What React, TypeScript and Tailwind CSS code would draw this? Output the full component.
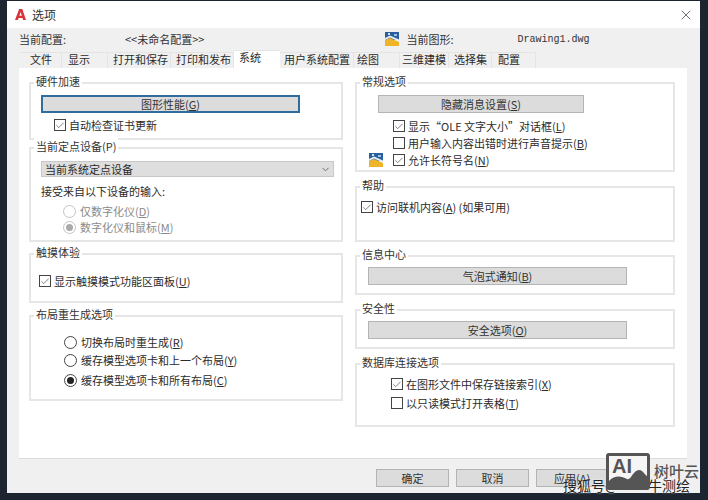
import type { ReactNode } from 'react';
import { X, ChevronDown, Check } from 'lucide-react';

const tabs = [
  { label: '文件', width: 'w-[42px] pl-[10px]' },
  { label: '显示', width: 'w-[46px] pl-[6px]' },
  { label: '打开和保存', width: 'w-[63px] pl-[5px]' },
  { label: '打印和发布', width: 'w-[63px] pl-[5px]' },
  { label: '系统', width: 'w-[46px] pl-[5px]', active: true },
  { label: '用户系统配置', width: 'w-[74px] pl-[4px]' },
  { label: '绘图', width: 'w-[46px] pl-[3px]' },
  { label: '三维建模', width: 'w-[49px] pl-[2px]' },
  { label: '选择集', width: 'w-[43px] pl-[5px]' },
  { label: '配置', width: 'w-[44px] pl-[6px]' },
];

const Key = ({ k }: { k: string }) => (
  <span>
    (<span className="underline">{k}</span>)
  </span>
);

const Group = ({ title, className, children }: { title: string; className: string; children?: ReactNode }) => (
  <div className={`relative border-2 border-[#e6e6e6] ${className}`}>
    <span className="absolute left-[3px] top-[-12px] bg-white px-[2px] leading-[18px] text-[#333]">{title}</span>
    {children}
  </div>
);

const Btn = ({ children, className, focused }: { children: ReactNode; className: string; focused?: boolean }) => (
  <div
    className={`flex items-center justify-center bg-[#dcdcdc] text-[#333] ${
      focused ? 'border-2 border-[#2f6d9e]' : 'border border-[#b4b4b4]'
    } ${className}`}
  >
    {children}
  </div>
);

const Checkbox = ({ label, checked, className = '' }: { label: ReactNode; checked?: boolean; className?: string }) => (
  <div className={`flex h-[16px] items-center gap-[3px] whitespace-nowrap ${className}`}>
    <span className="flex h-[12px] w-[12px] shrink-0 items-center justify-center border border-[#444] bg-white">
      {checked && <Check size={11} strokeWidth={1.5} className="text-[#333]" />}
    </span>
    {label}
  </div>
);

const Radio = ({ label, checked, disabled, className = '' }: { label: ReactNode; checked?: boolean; disabled?: boolean; className?: string }) => (
  <div className={`flex h-[16px] items-center gap-[4px] whitespace-nowrap ${disabled ? 'text-[#8a8a8a]' : ''} ${className}`}>
    <span className={`flex h-[13px] w-[13px] shrink-0 items-center justify-center rounded-full border bg-white ${disabled ? 'border-[#c4c4c4]' : 'border-[#444]'}`}>
      {checked && <span className={`h-[7px] w-[7px] rounded-full ${disabled ? 'bg-[#aaa]' : 'bg-[#222]'}`} />}
    </span>
    {label}
  </div>
);

const DrawingIcon = ({ className }: { className: string }) => (
  <svg viewBox="0 0 14 14" className={className}>
    <rect x="0" y="0" width="14" height="8" fill="#2a5f9e" />
    <path d="M0 8 L5 6 L14 10 V14 H0 Z" fill="#f0b429" />
    <path d="M0 8 L5 5.5 L14 9.5 V7.5 L5 3.5 L0 6 Z" fill="#e8eef5" />
    <rect x="3" y="1" width="2" height="2" fill="#cfe0f0" />
    <rect x="9" y="2" width="3" height="2" fill="#9cc3e6" />
  </svg>
);

export default function App() {
  return (
    <div className="h-[500px] w-[708px] overflow-hidden bg-[#1d2530] pl-[7px] pt-[1px] font-['Noto_Sans_CJK_SC',sans-serif] text-[11px] text-[#2b2b2b]">
      <div className="relative h-[492px] w-[693px] bg-[#f0f0f0]">
        {/* title bar */}
        <div className="flex h-[27px] items-center bg-white pl-[8px] pr-[6px]">
          <svg viewBox="0 0 12 12" className="h-[11px] w-[11px]">
            <path d="M0 12 L4.5 0 H8 L12 12 H8.8 L8.2 9.8 H3.9 L3.2 12 Z M4.8 7.4 H7.4 L6.2 3.4 Z" fill="#d8343a" fillRule="evenodd" />
          </svg>
          <span className="ml-[6px] text-[12px] text-[#333]">选项</span>
          <X size={16} strokeWidth={1} className="ml-auto text-[#222]" />
        </div>

        {/* current profile row */}
        <div className="flex h-[24px] items-center whitespace-nowrap pb-[2px] pl-[12px] text-[#333]">
          <span className="w-[106px]">当前配置:</span>
          <span>&lt;&lt;未命名配置&gt;&gt;</span>
          <DrawingIcon className="ml-[181px] h-[14px] w-[14px]" />
          <span className="ml-[7px] w-[111px]">当前图形:</span>
          <span className="font-['Liberation_Mono',monospace] text-[10px]">Drawing1.dwg</span>
        </div>

        {/* tabs */}
        <div className="flex h-[16px] items-end pl-[13px]">
          {tabs.map((tab) => (
            <div
              key={tab.label}
              className={`flex items-center whitespace-nowrap border-t border-[#e4e4e4] ${tab.width} ${
                tab.active ? 'relative z-10 h-[18px] bg-white pb-[4px]' : 'h-[16px] border-r bg-[#f0f0f0] pb-[2px]'
              }`}
            >
              {tab.label}
            </div>
          ))}
        </div>

        {/* panel */}
        <div className="ml-[12px] flex h-[390px] w-[668px] gap-[12px] bg-white pl-[10px] pt-[14px] shadow-[0_1px_0_#dcdcdc]">
          <div className="flex w-[314px] flex-col">
            <Group title="硬件加速" className="h-[58px] pl-[10px] pt-[11px]">
              <Btn focused className="h-[18px] w-[259px]">
                <span>图形性能<Key k="G" /></span>
              </Btn>
              <Checkbox checked className="ml-[13px] mt-[4px]" label="自动检查证书更新" />
            </Group>

            <Group title="当前定点设备(P)" className="mt-[7px] h-[95px] pl-[10px] pt-[12px]">
              <div className="flex h-[16px] w-[293px] items-center justify-between border border-[#c8c8c8] bg-[#dedede] pl-[3px] pr-[2px]">
                <span>当前系统定点设备</span>
                <ChevronDown size={11} className="text-[#666]" />
              </div>
              <div className="mt-[6px] h-[17px] leading-[17px]">接受来自以下设备的输入:</div>
              <Radio disabled className="ml-[22px] mt-[3px]" label={<span>仅数字化仪<Key k="D" /></span>} />
              <Radio disabled checked className="ml-[22px]" label={<span>数字化仪和鼠标<Key k="M" /></span>} />
            </Group>

            <Group title="触摸体验" className="mt-[11px] h-[50px] pl-[8px] pt-[18px]">
              <Checkbox checked label={<span>显示触摸模式功能区面板<Key k="U" /></span>} />
            </Group>

            <Group title="布局重生成选项" className="mt-[12px] h-[86px] pl-[33px] pt-[17px]">
              <Radio label={<span>切换布局时重生成<Key k="R" /></span>} />
              <Radio className="mt-[2px]" label={<span>缓存模型选项卡和上一个布局<Key k="Y" /></span>} />
              <Radio checked className="mt-[4px]" label={<span>缓存模型选项卡和所有布局<Key k="C" /></span>} />
            </Group>
          </div>

          <div className="flex w-[320px] flex-col">
            <Group title="常规选项" className="relative h-[90px] pl-[21px] pt-[11px]">
              <Btn className="h-[18px] w-[206px]">
                <span>隐藏消息设置<Key k="S" /></span>
              </Btn>
              <Checkbox checked className="ml-[15px] mt-[5px]" label={<span>显示“OLE 文字大小”对话框<Key k="L" /></span>} />
              <Checkbox className="ml-[15px] mt-[1px]" label={<span>用户输入内容出错时进行声音提示<Key k="B" /></span>} />
              <Checkbox checked className="ml-[15px] mt-[1px]" label={<span>允许长符号名<Key k="N" /></span>} />
              <DrawingIcon className="absolute left-[12px] top-[69px] h-[14px] w-[14px]" />
            </Group>

            <Group title="帮助" className="mt-[14px] h-[56px] pl-[4px] pt-[11px]">
              <Checkbox checked label={<span>访问联机内容<Key k="A" /> (如果可用)</span>} />
            </Group>

            <Group title="信息中心" className="mt-[13px] h-[40px] pl-[11px] pt-[10px]">
              <Btn className="h-[18px] w-[259px]">
                <span>气泡式通知<Key k="B" /></span>
              </Btn>
            </Group>

            <Group title="安全性" className="mt-[14px] h-[40px] pl-[11px] pt-[10px]">
              <Btn className="h-[18px] w-[259px]">
                <span>安全选项<Key k="O" /></span>
              </Btn>
            </Group>

            <Group title="数据库连接选项" className="mt-[14px] h-[64px] pl-[34px] pt-[11px]">
              <Checkbox checked label={<span>在图形文件中保存链接索引<Key k="X" /></span>} />
              <Checkbox className="mt-[3px]" label={<span>以只读模式打开表格<Key k="T" /></span>} />
            </Group>
          </div>
        </div>

        {/* footer buttons */}
        <div className="mt-[11px] flex gap-[7px] pl-[369px]">
          <Btn className="h-[18px] w-[73px]">确定</Btn>
          <Btn className="h-[18px] w-[73px]">取消</Btn>
          <Btn className="h-[18px] w-[73px] !justify-start pl-[17px]">应用(A)</Btn>
        </div>
      </div>

      {/* watermark */}
      <span className="absolute left-[563px] top-[476px] whitespace-nowrap text-[14px] leading-[18px] text-[#222] [text-shadow:0_0_2px_#fff]">搜狐号@</span>
      <span className="absolute left-[648px] top-[476px] whitespace-nowrap text-[14px] leading-[18px] text-[#222] [text-shadow:0_0_2px_#fff]">牛测绘</span>
      <div className="absolute left-[606px] top-[453px] flex h-[37px] w-[44px] items-start justify-start overflow-hidden rounded-[3px] border-[3px] border-[#555] bg-[#f5f5f5]">
        <span className="ml-[3px] font-['Liberation_Sans',sans-serif] text-[20px] font-bold leading-[20px] text-[#555]">AI</span>
        <svg viewBox="0 0 38 31" className="absolute inset-0 h-full w-full">
          <path d="M0 25 C6 19 12 20 18 23 C22 25 24 14 30 14 C34 14 36 19 38 20 V31 H0 Z" fill="#555" />
        </svg>
      </div>
      <span className="absolute left-[654px] top-[463px] text-[15px] font-medium leading-[16px] text-[#555]">树叶云</span>
    </div>
  );
}
